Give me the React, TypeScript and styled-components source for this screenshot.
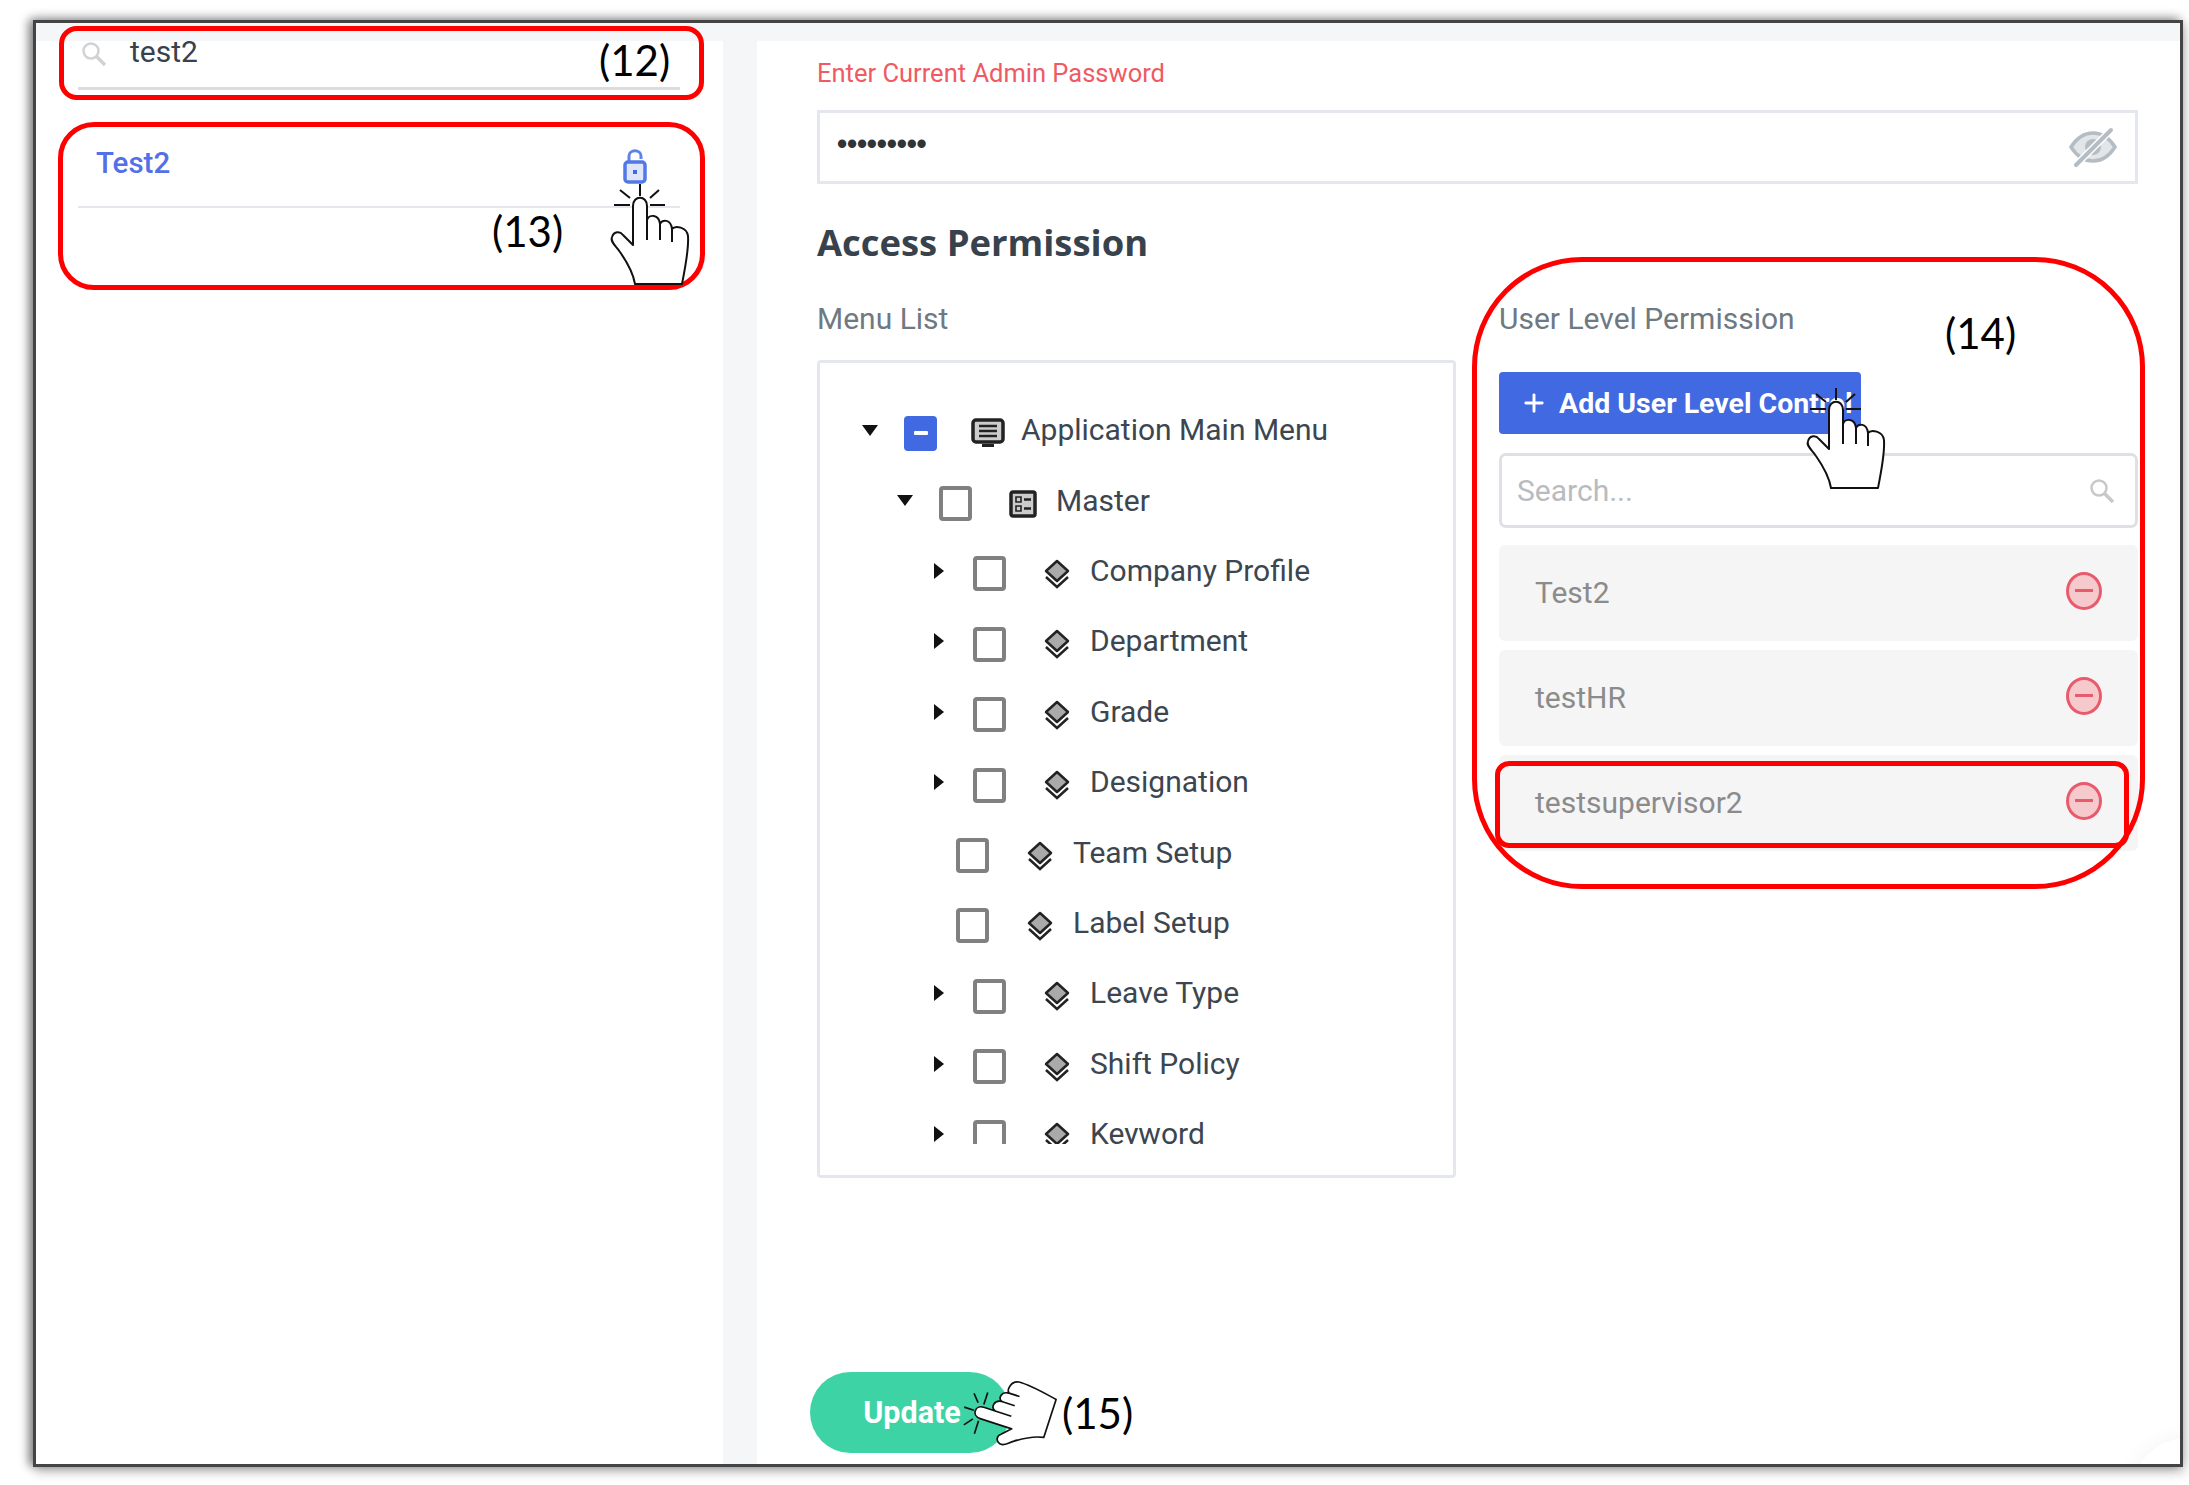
import React from 'react';
import styled, { createGlobalStyle } from 'styled-components';
import { Plus } from 'lucide-react';

// Types
interface MenuRow {
  label: string;
  indent: number;
  arrow?: 'down' | 'right';
  icon: 'monitor' | 'master' | 'layers';
  state?: 'partial';
}

const GlobalStyle = createGlobalStyle`
  html, body {
    margin: 0;
    padding: 0;
    background: #fff;
  }
  * { box-sizing: border-box; }
`;

// Styled Components
const Page = styled.div`
  width: 2189px;
  height: 1485px;
  padding: 20px 0 0 33px;
  overflow: hidden;
  font-family: Roboto, 'Liberation Sans', sans-serif;
`;

const Frame = styled.div`
  position: relative;
  width: 2150px;
  height: 1447px;
  padding-top: 18px;
  display: grid;
  grid-template-columns: 687px 1fr;
  column-gap: 34px;
  overflow: hidden;
  background: #f5f6f8;
  border: 3px solid #444;
  box-shadow: -5px -1px 9px rgba(0, 0, 0, 0.4), 0 -4px 10px rgba(0, 0, 0, 0.12), 2px 6px 10px rgba(0, 0, 0, 0.2);
`;

const LeftPanel = styled.aside`
  background: #fff;
  padding: 0 43px 0 42px;
`;

const SearchRow = styled.div`
  height: 49px;
  display: flex;
  gap: 23px;
  padding: 0 0 0 3px;
  border-bottom: 3px solid #dcdcdc;
  color: #38424c;
  font-size: 30px;
  line-height: 22px;
`;

const UserRow = styled.div`
  height: 118px;
  display: flex;
  justify-content: space-between;
  padding: 55px 33px 0 18px;
  border-bottom: 2px solid #e4e8ec;
  color: #5470e8;
  font-size: 29.5px;
  font-weight: 500;
  line-height: 36px;

  svg {
    margin-top: 3px;
  }
`;

const RightPanel = styled.main`
  background: #fff;
  padding: 15px 42px 11px 60px;
  display: flex;
  flex-direction: column;
`;

const PasswordLabel = styled.div`
  color: #ef5a63;
  font-size: 25.5px;
  line-height: 34px;
`;

const PasswordField = styled.div`
  height: 74px;
  margin-top: 20px;
  padding: 0 17px 0 17px;
  display: flex;
  justify-content: space-between;
  align-items: center;
  border: 3px solid #e4e8ee;
`;

const Dots = styled.span`
  color: #333;
  font-family: 'Liberation Sans', sans-serif;
  font-size: 29px;
  font-weight: 700;
  letter-spacing: -0.2px;
  margin-top: -6px;
`;

const SectionTitle = styled.h2`
  margin: 36px 0 0;
  color: #38424c;
  font-family: 'Open Sans', sans-serif;
  font-size: 36.4px;
  font-weight: 700;
  line-height: 44px;
`;

const Columns = styled.div`
  margin-top: 38px;
  display: grid;
  grid-template-columns: 639px 639px;
  column-gap: 43px;
`;

const ColumnTitle = styled.div`
  color: #6e7982;
  font-size: 30px;
  line-height: 34px;
`;

const TreeBox = styled.div`
  height: 818px;
  margin-top: 24px;
  padding: 33px 0 0 33px;
  border: 3px solid #e4e8ee;
  border-radius: 4px;
`;

const TreeScroll = styled.div`
  height: 748px;
  overflow: hidden;
`;

const TreeItem = styled.div<{ $indent: number }>`
  height: 70.4px;
  padding-left: ${(p) => p.$indent}px;
  display: flex;
  align-items: center;
  color: #3c4650;
  font-size: 30px;
`;

const ArrowSlot = styled.span`
  width: 34px;
  display: flex;
  justify-content: center;
  margin-top: -2px;
`;

const ArrowDown = styled.i`
  border-left: 8px solid transparent;
  border-right: 8px solid transparent;
  border-top: 11px solid #111;
`;

const ArrowRight = styled.i`
  border-top: 8px solid transparent;
  border-bottom: 8px solid transparent;
  border-left: 10px solid #111;
`;

const Check = styled.span<{ $partial?: boolean }>`
  width: 33px;
  height: 35px;
  margin: 4px 0 0 17px;
  flex: none;
  display: flex;
  align-items: center;
  justify-content: center;
  background: ${(p) => (p.$partial ? '#4169e1' : '#fff')};
  border: 4px solid ${(p) => (p.$partial ? '#4169e1' : '#808080')};
  border-radius: 4px;

  &::after {
    content: '';
    display: ${(p) => (p.$partial ? 'block' : 'none')};
    width: 14px;
    height: 4px;
    background: #fff;
    border-radius: 1px;
  }
`;

const IconSlot = styled.span`
  width: 34px;
  margin: 4px 0 0 34px;
  display: flex;
  justify-content: center;
`;

const ItemLabel = styled.span`
  margin: -3px 0 0 16px;
  white-space: nowrap;
`;

const AddButton = styled.button`
  width: 362px;
  height: 62px;
  margin-top: 36px;
  padding: 0 0 0 21px;
  display: flex;
  align-items: center;
  gap: 11px;
  background: #4169e1;
  border: 0;
  border-radius: 4px;
  color: #fff;
  font-family: Roboto, sans-serif;
  font-size: 28.5px;
  font-weight: 700;
  white-space: nowrap;
  overflow: hidden;
`;

const SearchBox = styled.div`
  height: 75px;
  margin-top: 19px;
  padding: 0 20px 0 15px;
  display: flex;
  justify-content: space-between;
  align-items: center;
  border: 3px solid #dde1e6;
  border-radius: 7px;
  color: #b8bcc0;
  font-size: 30px;
`;

const LevelList = styled.div`
  margin-top: 17px;
  display: flex;
  flex-direction: column;
  gap: 9px;
`;

const LevelItem = styled.div`
  height: 96px;
  padding: 0 36px 2px 36px;
  display: flex;
  justify-content: space-between;
  align-items: center;
  background: #f5f5f5;
  border-radius: 6px;
  color: #8b8b8b;
  font-size: 30px;
`;

const RemoveIcon = styled.span`
  width: 36px;
  height: 38px;
  margin-top: -3px;
  display: flex;
  align-items: center;
  justify-content: center;
  background: #f6c9cd;
  border: 3px solid #e85a6c;
  border-radius: 50%;

  &::after {
    content: '';
    width: 18px;
    height: 3px;
    background: #e85a6c;
  }
`;

const UpdateButton = styled.button`
  width: 200px;
  height: 81px;
  margin: auto 0 0 -7px;
  padding: 0 0 0 4px;
  background: #3ed3a4;
  border: 0;
  border-radius: 41px;
  color: #fff;
  font-family: Roboto, sans-serif;
  font-size: 30.5px;
  font-weight: 700;
`;

// Overlays: the red callouts, hand cursors and step numbers drawn over the screen
const Callout = styled.div<{ $x: number; $y: number; $w: number; $h: number; $r: number }>`
  position: absolute;
  left: ${(p) => p.$x}px;
  top: ${(p) => p.$y}px;
  width: ${(p) => p.$w}px;
  height: ${(p) => p.$h}px;
  border: 5px solid #f00;
  border-radius: ${(p) => p.$r}px;
  pointer-events: none;
`;

const StepNumber = styled.span<{ $x: number; $y: number }>`
  position: absolute;
  left: ${(p) => p.$x}px;
  top: ${(p) => p.$y}px;
  color: #000;
  font-family: Lato, sans-serif;
  font-size: 42px;
  line-height: 50px;
`;

const HandWrap = styled.svg<{ $x: number; $y: number; $turn?: number; $scale?: number }>`
  position: absolute;
  left: ${(p) => p.$x}px;
  top: ${(p) => p.$y}px;
  transform: rotate(${(p) => p.$turn ?? 0}deg) scale(${(p) => p.$scale ?? 1});
  overflow: visible;
`;

const CornerArc = styled.div`
  position: absolute;
  left: 2096px;
  top: 1415px;
  width: 110px;
  height: 110px;
  background: #fff;
  border-radius: 50%;
  box-shadow: 0 0 22px rgba(0, 0, 0, 0.05);
`;

const menuRows: MenuRow[] = [
  { label: 'Application Main Menu', indent: 0, arrow: 'down', icon: 'monitor', state: 'partial' },
  { label: 'Master', indent: 35, arrow: 'down', icon: 'master' },
  { label: 'Company Profile', indent: 69, arrow: 'right', icon: 'layers' },
  { label: 'Department', indent: 69, arrow: 'right', icon: 'layers' },
  { label: 'Grade', indent: 69, arrow: 'right', icon: 'layers' },
  { label: 'Designation', indent: 69, arrow: 'right', icon: 'layers' },
  { label: 'Team Setup', indent: 52, icon: 'layers' },
  { label: 'Label Setup', indent: 52, icon: 'layers' },
  { label: 'Leave Type', indent: 69, arrow: 'right', icon: 'layers' },
  { label: 'Shift Policy', indent: 69, arrow: 'right', icon: 'layers' },
  { label: 'Keyword', indent: 69, arrow: 'right', icon: 'layers' },
];

const levels = ['Test2', 'testHR', 'testsupervisor2'];

const SearchGlyph = ({ tone }: { tone: string }) => (
  <svg width="26" height="26" viewBox="0 0 26 26" fill="none" stroke={tone}>
    <circle cx="10" cy="10" r="7.500" strokeWidth="2.500" />
    <path d="M15.500 15.500 24 24" strokeWidth="3.500" />
  </svg>
);

const LayersIcon = () => (
  <svg width="26" height="30" viewBox="0 0 26 30">
    <path d="M13 2 24 12 13 22 2 12Z" fill="#aaa" stroke="#222" strokeWidth="2.5" strokeLinejoin="round" />
    <path d="M2 18 13 28 24 18" fill="none" stroke="#222" strokeWidth="2.5" />
  </svg>
);

const MonitorIcon = () => (
  <svg width="34" height="30" viewBox="0 0 34 30">
    <rect x="2" y="2" width="30" height="22" rx="3" fill="#ccc" stroke="#222" strokeWidth="3.500" />
    <path d="M8 8H26M8 13H26M8 18H26" stroke="#222" strokeWidth="2.5" />
    <path d="M11 26H23V29H11Z" fill="#222" />
  </svg>
);

const MasterIcon = () => (
  <svg width="28" height="28" viewBox="0 0 28 28">
    <rect x="2" y="2" width="24" height="24" rx="2" fill="#ccc" stroke="#222" strokeWidth="3.500" />
    <path d="M7 7H12V12H7ZM7 16H12V21H7Z" fill="none" stroke="#222" strokeWidth="1.6" />
    <path d="M15 9.500H22M15 18.500H22" stroke="#222" strokeWidth="2.5" />
  </svg>
);

const menuIcons = {
  monitor: <MonitorIcon />,
  master: <MasterIcon />,
  layers: <LayersIcon />,
};

const LockIcon = () => (
  <svg width="24" height="36" viewBox="0 0 24 36">
    <path d="M6 14V8C6 1 18 1 18 8V11" fill="none" stroke="#5f82e8" strokeWidth="3" />
    <rect x="2" y="14" width="20" height="20" rx="3" fill="#dfe6fb" stroke="#5278e6" strokeWidth="3.500" />
    <rect x="10" y="22" width="4" height="4" fill="#4169e1" />
  </svg>
);

const EyeOffIcon = () => (
  <svg width="50" height="42" viewBox="0 0 50 42">
    <path d="M3 21C10 10 17 7 25 7S40 10 47 21C40 32 33 35 25 35S10 32 3 21Z" fill="#e3e6e9" stroke="#b5bdc4" strokeWidth="3.500" />
    <circle cx="25" cy="21" r="8" fill="#b5bdc4" />
    <path d="M7 40 44 3" stroke="#fff" strokeWidth="7" />
    <path d="M8 39 43 4" stroke="#b5bdc4" strokeWidth="4" strokeLinecap="round" />
  </svg>
);

const Hand = ({ x, y, turn, scale }: { x: number; y: number; turn?: number; scale?: number }) => (
  <HandWrap $x={x} $y={y} $turn={turn} $scale={scale} width="78" height="100" viewBox="0 0 78 100">
    <path
      d="M23 61V22C23 11 37 11 37 22V36C39 30 49 30 50 40C52 35 61 35 62 45C65 41 77 43 78 52C79 66 75 84 72 100H25C23 88 17 78 10 68C6 62 0 58 2 53C4 47 10 47 13 51Z"
      fill="#fff"
      stroke="#111"
      strokeWidth="2"
      strokeLinejoin="round"
    />
    <path
      d="M37 36V56M50 40V56M62 45V58M30 0V12M10 6 20 14M49 6 40 14M4 21H20M40 21H55"
      fill="none"
      stroke="#111"
      strokeWidth="2"
    />
  </HandWrap>
);

// Page Component
export default function App() {
  return (
    <Page>
      <GlobalStyle />
      <Frame>
        <LeftPanel>
          <SearchRow>
            <SearchGlyph tone="#d2d2d2" />
            <span>test2</span>
          </SearchRow>
          <UserRow>
            <span>Test2</span>
            <LockIcon />
          </UserRow>
        </LeftPanel>

        <RightPanel>
          <PasswordLabel>Enter Current Admin Password</PasswordLabel>
          <PasswordField>
            <Dots>•••••••••</Dots>
            <EyeOffIcon />
          </PasswordField>
          <SectionTitle>Access Permission</SectionTitle>
          <Columns>
            <div>
              <ColumnTitle>Menu List</ColumnTitle>
              <TreeBox>
                <TreeScroll>
                  {menuRows.map((row) => (
                    <TreeItem key={row.label} $indent={row.indent}>
                      <ArrowSlot>
                        {row.arrow === 'down' && <ArrowDown />}
                        {row.arrow === 'right' && <ArrowRight />}
                      </ArrowSlot>
                      <Check $partial={row.state === 'partial'} />
                      <IconSlot>{menuIcons[row.icon]}</IconSlot>
                      <ItemLabel>{row.label}</ItemLabel>
                    </TreeItem>
                  ))}
                </TreeScroll>
              </TreeBox>
            </div>
            <div>
              <ColumnTitle>User Level Permission</ColumnTitle>
              <AddButton>
                <Plus size={28} strokeWidth={2.5} />
                Add User Level Control
              </AddButton>
              <SearchBox>
                <span>Search...</span>
                <SearchGlyph tone="#c8c8c8" />
              </SearchBox>
              <LevelList>
                {levels.map((level) => (
                  <LevelItem key={level}>
                    {level}
                    <RemoveIcon />
                  </LevelItem>
                ))}
              </LevelList>
            </div>
          </Columns>
          <UpdateButton>Update</UpdateButton>
        </RightPanel>

        <CornerArc />

        <Callout $x={23} $y={3} $w={645} $h={74} $r={18} />
        <Callout $x={22} $y={99} $w={647} $h={168} $r={36} />
        <Callout $x={1436} $y={234} $w={673} $h={632} $r={110} />
        <Callout $x={1459} $y={738} $w={634} $h={87} $r={14} />

        <StepNumber $x={563} $y={12}>(12)</StepNumber>
        <StepNumber $x={456} $y={183}>(13)</StepNumber>
        <StepNumber $x={1909} $y={285}>(14)</StepNumber>
        <StepNumber $x={1026} $y={1365}>(15)</StepNumber>

        <Hand x={574} y={161} />
        <Hand x={1770} y={365} />
        <Hand x={932} y={1340} turn={-72} scale={0.85} />
      </Frame>
    </Page>
  );
}
